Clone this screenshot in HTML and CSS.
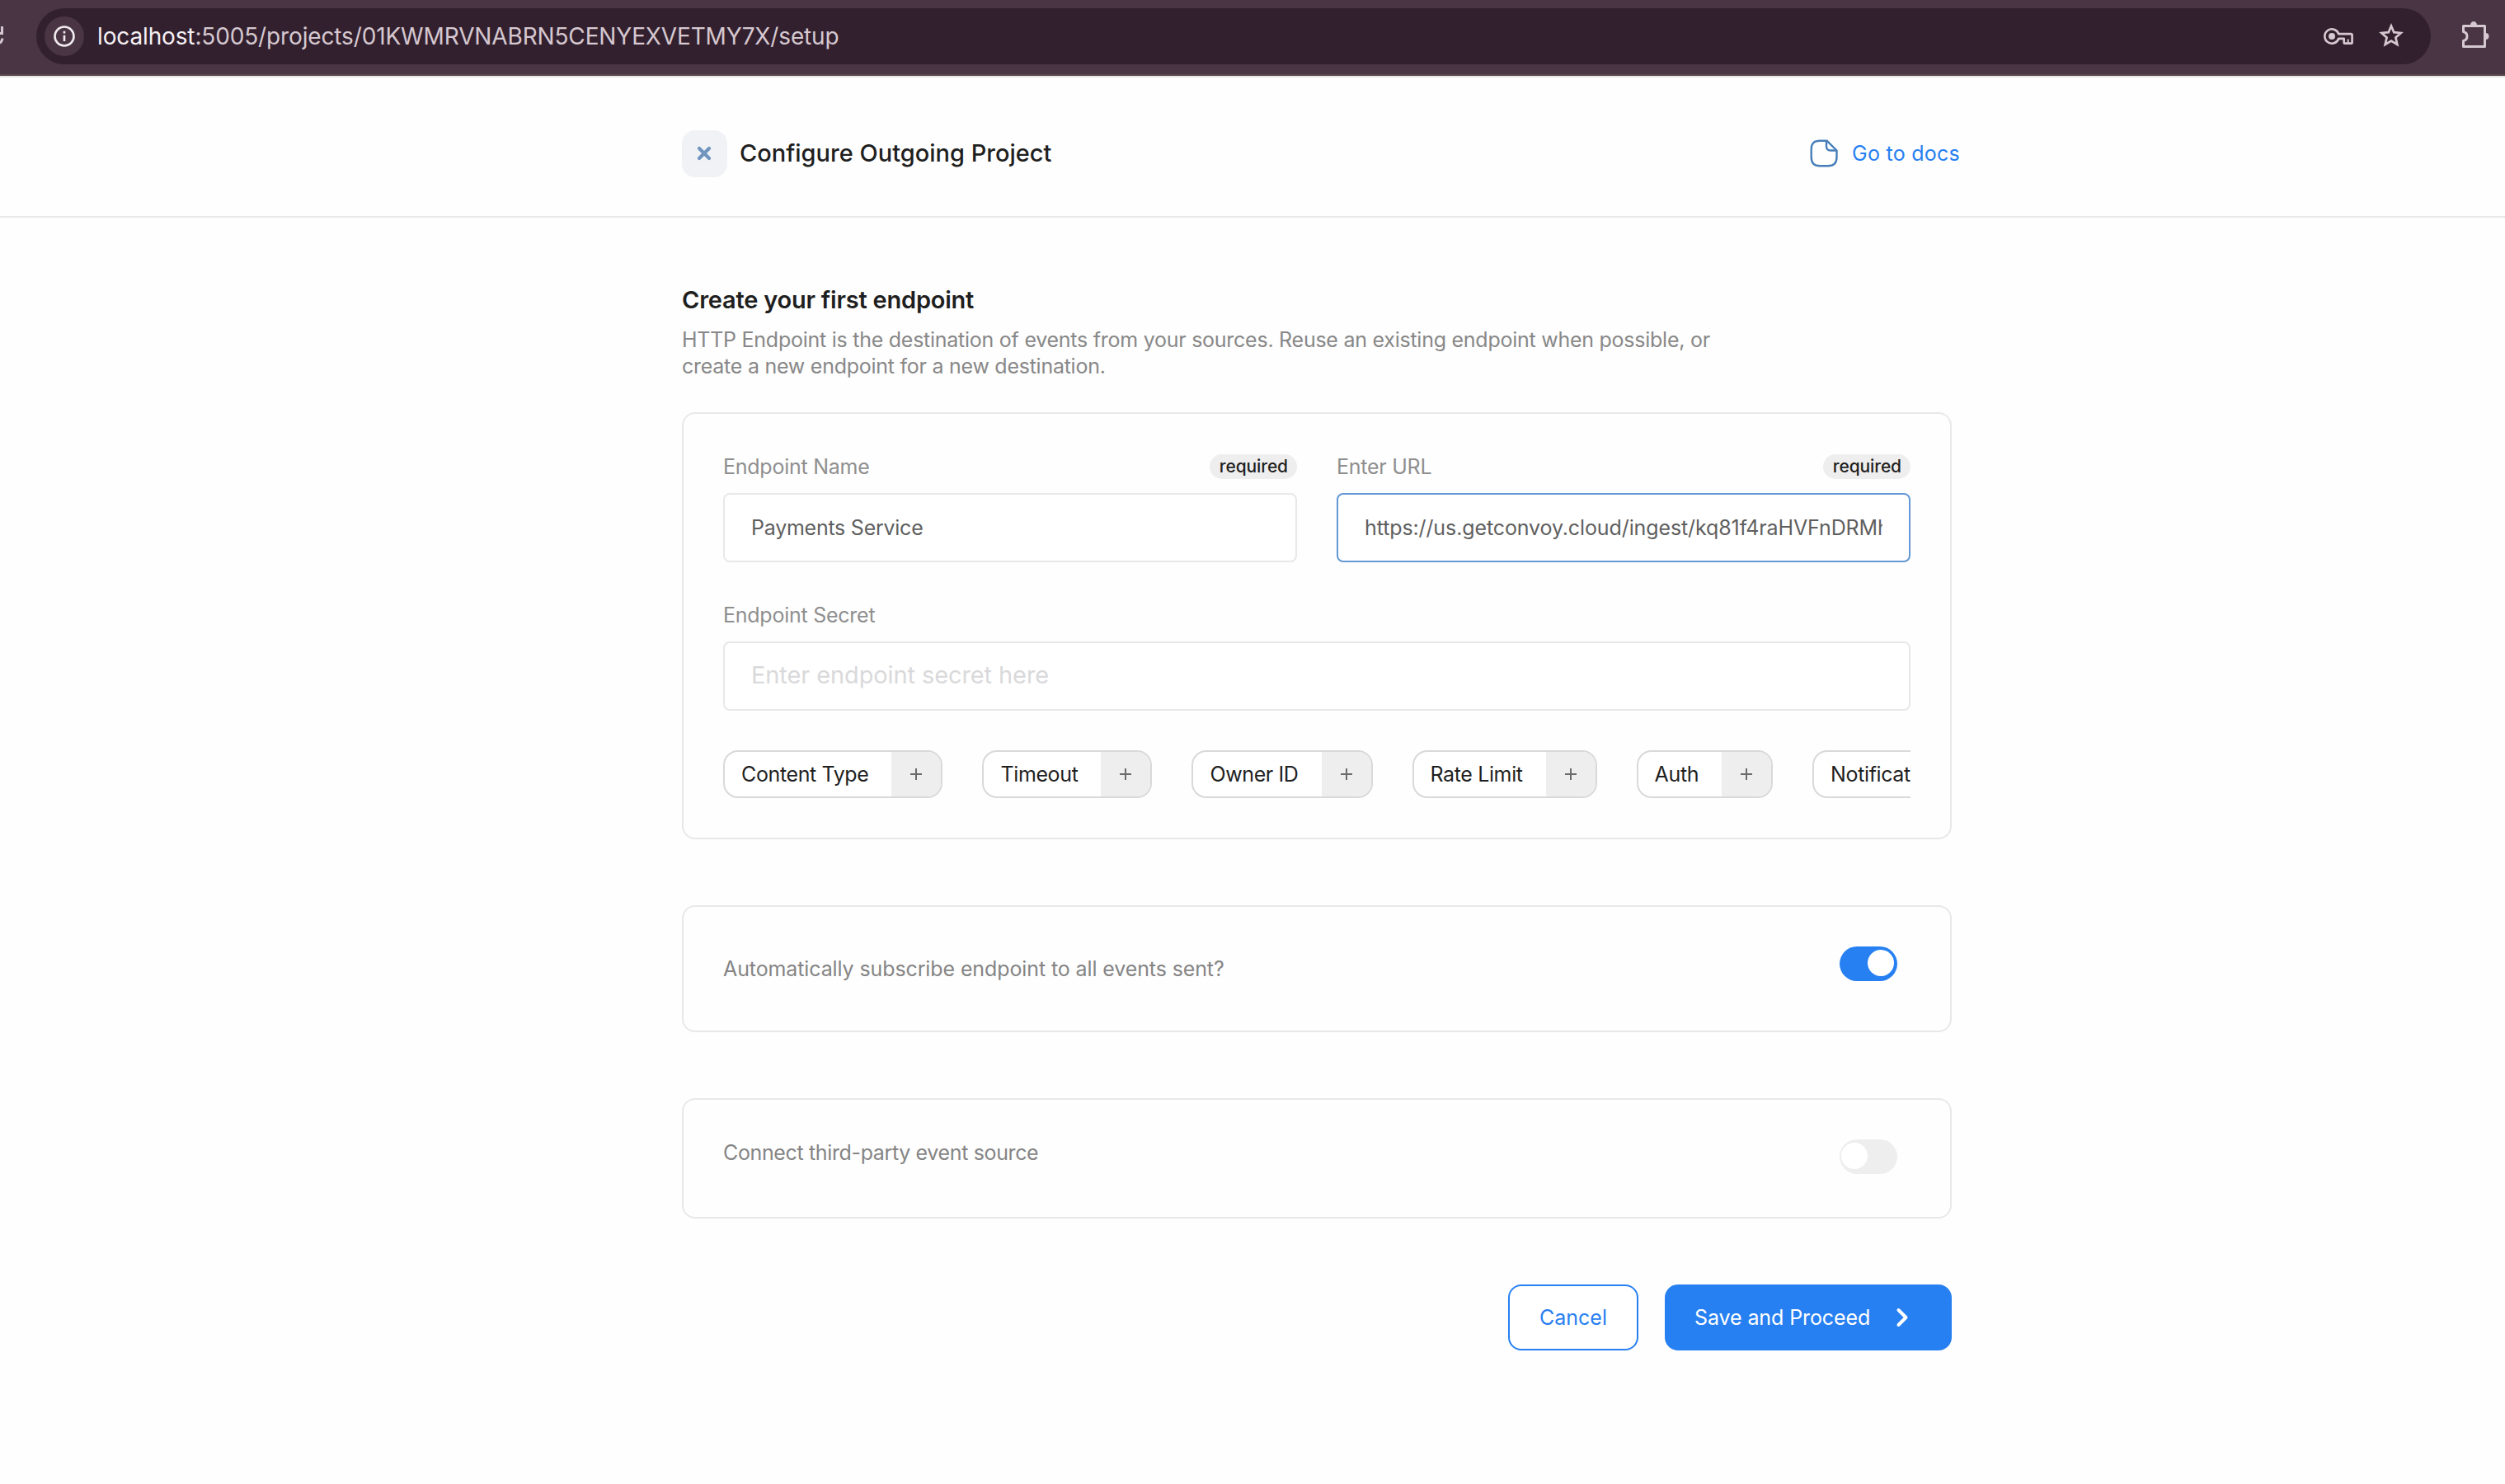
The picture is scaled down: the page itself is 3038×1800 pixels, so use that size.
FILE: index.html
```html
<!DOCTYPE html>
<html>
<head>
    <title>Configure Outgoing Project</title>
    <meta charset="UTF-8">
    <link rel="stylesheet" href="styles.css">
</head>
<body>

    <!-- Browser bar -->
    <div class="browser-bar">
        <svg class="reload-icon" width="6" height="26" viewBox="0 0 6 26" fill="none" stroke="#d5c8d0" stroke-width="3">
            <path d="M2.500 0v8.500H0"/>
            <path d="M3 14.500Q2.600 18 0 20.500"/>
        </svg>
        <div class="omnibox">
            <div class="site-info">
                <svg width="26" height="26" viewBox="0 0 26 26" fill="none" stroke="#f0ebee" stroke-width="2.600">
                    <circle cx="13" cy="13" r="11.500"/>
                    <path d="M13 11.800v7.200M13 6.800v2.600"/>
                </svg>
            </div>
            <div class="url"><span>localhost</span>:5005/projects/01KWMRVNABRN5CENYEXVETMY7X/setup</div>
            <svg class="key-icon" width="36" height="22" viewBox="0 0 36 22" fill="none" stroke="#d5c8d0" stroke-width="2.700" stroke-linejoin="round">
                <path d="M18.300 8.200A8.700 8.700 0 1 0 18.300 13.800H24.700V18.200Q24.700 19.700 26.200 19.700H33Q34.600 19.700 34.600 18.200V9.700Q34.600 8.200 33 8.200Z"/>
                <circle cx="10" cy="11" r="4" fill="#d5c8d0" stroke="none"/>
                <path d="M29.700 19v-4.500" stroke-width="2"/>
            </svg>
            <svg class="star-icon" width="32" height="30" viewBox="0 0 32 30" fill="none" stroke="#d5c8d0" stroke-width="2.700">
                <path d="M16 3.500L19.300 11.200L27.700 12L21.400 17.600L23.300 25.900L16 21.500L8.700 25.900L10.600 17.600L4.300 12L12.700 11.200Z"/>
            </svg>
        </div>
        <svg class="puzzle-icon" width="33" height="33" viewBox="0 0 33 33" fill="none" stroke="#d5c8d0" stroke-width="3" stroke-linejoin="round">
            <path d="M1.500 5.500H27.500V30.500H1.500V23.500Q6 22.500 6 18Q6 13.500 1.500 12.500Z"/>
            <path d="M10 4.500A4 4.500 0 0 1 18 4.500ZM28.500 14A4 4 0 0 1 28.500 22Z" fill="#d5c8d0" stroke="none"/>
        </svg>
    </div>

    <!-- Page header -->
    <header class="page-header">
        <div class="header-inner">
            <button class="close-btn" type="button">
                <svg width="18" height="18" viewBox="0 0 18 18" fill="none" stroke="#6f94bd" stroke-width="4.200" stroke-linecap="round">
                    <path d="M3 3L15 15M15 3L3 15"/>
                </svg>
            </button>
            <h1>Configure Outgoing Project</h1>
            <a class="docs-link">
                <svg width="34" height="34" viewBox="0 0 34 34" fill="none" stroke="#477eb9" stroke-width="2.400" stroke-linejoin="round">
                    <path d="M20.500 1.700H12Q1.700 1.700 1.700 12V21.500Q1.700 32.300 12 32.300H22Q32.500 32.300 32.500 21.500V13.500Z"/>
                    <path d="M20 2V8.500Q20 13.500 25 13.500H32"/>
                </svg>
                Go to docs
            </a>
        </div>
    </header>

    <!-- Endpoint setup -->
    <main class="container">
        <h2>Create your first endpoint</h2>
        <p class="description">HTTP Endpoint is the destination of events from your sources. Reuse an existing endpoint when possible, or<br>create a new endpoint for a new destination.</p>

        <div class="card">
            <div class="field-row">
                <div class="field">
                    <div class="field-label">
                        <label for="name">Endpoint Name</label>
                        <span class="badge">required</span>
                    </div>
                    <input type="text" id="name" value="Payments Service">
                </div>
                <div class="field">
                    <div class="field-label">
                        <label for="url">Enter URL</label>
                        <span class="badge">required</span>
                    </div>
                    <input type="text" id="url" class="focused" value="https://us.getconvoy.cloud/ingest/kq81f4raHVFnDRMh">
                </div>
            </div>

            <div class="field">
                <div class="field-label">
                    <label for="secret">Endpoint Secret</label>
                </div>
                <input type="text" id="secret" placeholder="Enter endpoint secret here">
            </div>

            <div class="pills">
                <button class="pill" type="button"><span class="pill-name">Content Type</span><span class="pill-add"></span></button>
                <button class="pill" type="button"><span class="pill-name">Timeout</span><span class="pill-add"></span></button>
                <button class="pill" type="button"><span class="pill-name">Owner ID</span><span class="pill-add"></span></button>
                <button class="pill" type="button"><span class="pill-name">Rate Limit</span><span class="pill-add"></span></button>
                <button class="pill" type="button"><span class="pill-name">Auth</span><span class="pill-add"></span></button>
                <button class="pill" type="button"><span class="pill-name">Notifications</span><span class="pill-add"></span></button>
            </div>
        </div>

        <div class="card toggle-card subscribe">
            <span class="toggle-label">Automatically subscribe endpoint to all events sent?</span>
            <div class="toggle on"></div>
        </div>

        <div class="card toggle-card source">
            <span class="toggle-label">Connect third-party event source</span>
            <div class="toggle"></div>
        </div>

        <div class="actions">
            <button class="btn btn-outline" type="button">Cancel</button>
            <button class="btn btn-primary" type="button">
                Save and Proceed
                <svg width="16" height="24" viewBox="0 0 16 24" fill="none" stroke="#fff" stroke-width="4" stroke-linecap="round" stroke-linejoin="round">
                    <path d="M3.500 3L12.500 12L3.500 21"/>
                </svg>
            </button>
        </div>
    </main>

</body>
</html>
```
FILE: styles.css
```css
* {
    box-sizing: border-box;
}

body {
    font-family: Inter, "Liberation Sans", sans-serif;
    font-size: 25px;
    background-color: #fefefe;
    color: #1f1f1f;
    margin: 0;
    overflow: hidden;
}

button,
input {
    font-family: inherit;
    font-size: 25px;
    letter-spacing: inherit;
}

svg {
    display: block;
    flex-shrink: 0;
}

/* Browser bar */
.browser-bar {
    display: flex;
    align-items: flex-start;
    height: 94px;
    background-color: #4a3545;
    border-bottom: 2px solid #e6e6e6;
    box-shadow: inset 0 -2px 0 #57474b;
}

.reload-icon {
    margin: 32px 38px 0 0;
}

.omnibox {
    display: flex;
    align-items: center;
    width: 2904px;
    height: 68px;
    margin-top: 10px;
    padding: 0 32px 0 10px;
    border-radius: 34px;
    background-color: #33202e;
}

.site-info {
    display: flex;
    align-items: center;
    justify-content: center;
    width: 48px;
    height: 48px;
    border-radius: 50%;
    background-color: #4a3545;
}

.url {
    flex: 1;
    margin-left: 16px;
    font-size: 28px;
    letter-spacing: -0.14px;
    color: #d5c8d0;
}

.url span {
    color: #f5f0f3;
}

.key-icon {
    margin-right: 30px;
}

.star-icon {
    margin-bottom: 2px;
}

.puzzle-icon {
    margin: 26px 0 0 38px;
}

/* Header */
.page-header {
    height: 170px;
    padding-top: 64px;
    border-bottom: 2px solid #e8e8e8;
}

.header-inner {
    display: flex;
    align-items: center;
    width: 1550px;
    height: 57px;
    margin-left: 827px;
}

.close-btn {
    display: flex;
    align-items: center;
    justify-content: center;
    width: 55px;
    height: 57px;
    padding: 0 1px 1px 0;
    border: none;
    border-radius: 16px;
    background-color: #f1f2f6;
}

h1 {
    flex: 1;
    margin: 0;
    padding: 0 0 2px 15px;
    font-size: 29px;
    font-weight: 500;
}

.docs-link {
    display: flex;
    align-items: center;
    gap: 17px;
    padding-bottom: 2px;
    letter-spacing: 0.25px;
    color: #2780f1;
}

/* Form */
.container {
    width: 1540px;
    margin-left: 827px;
    padding-top: 82px;
}

h2 {
    margin: 0 0 14px;
    font-size: 29px;
    line-height: 36px;
    font-weight: 600;
    letter-spacing: -0.22px;
}

.description {
    margin: 0 0 40px;
    line-height: 32px;
    letter-spacing: -0.255px;
    white-space: nowrap;
    color: #888;
}

.card {
    margin-bottom: 80px;
    padding: 48px;
    border: 2px solid #e8e8e8;
    border-radius: 16px;
}

.field-row {
    display: grid;
    grid-template-columns: 1fr 1fr;
    gap: 48px;
}

.field {
    margin-bottom: 48px;
}

.field-label {
    display: flex;
    align-items: center;
    justify-content: space-between;
    height: 32px;
    margin-bottom: 16px;
    letter-spacing: -0.25px;
    color: #8f8f8f;
}

.badge {
    height: 30px;
    padding: 0 11px 0 12px;
    border-radius: 15px;
    background-color: #eee;
    color: #1f1f1f;
    font-size: 21px;
    line-height: 30px;
    font-weight: 500;
    letter-spacing: -0.1px;
}

input {
    display: block;
    width: 100%;
    height: 84px;
    padding: 0 32px;
    border: 2px solid #e8e8e8;
    border-radius: 8px;
    outline: none;
    background-color: #fff;
    letter-spacing: -0.25px;
    color: #5f5f5f;
}

input.focused {
    border-color: #6398d2;
    letter-spacing: -0.11px;
}

input::placeholder {
    font-size: 29px;
    letter-spacing: -0.1px;
    color: #d9d9db;
}

.pills {
    display: flex;
    gap: 48px;
    overflow: hidden;
}

.pill {
    display: flex;
    flex-shrink: 0;
    height: 58px;
    padding: 0;
    border: 2px solid #d9d9d9;
    border-radius: 18px;
    background-color: #fff;
    color: #1f1f1f;
    overflow: hidden;
}

.pill-name {
    padding: 0 28px 0 20px;
    line-height: 54px;
    letter-spacing: -0.38px;
}

/* Plus sign made of two thin bars */
.pill-add {
    width: 60px;
    height: 54px;
    background:
        linear-gradient(#6b6b6b, #6b6b6b) center / 14px 2px no-repeat,
        linear-gradient(#6b6b6b, #6b6b6b) center / 2px 14px no-repeat,
        #eee;
}

.toggle-card {
    display: flex;
    align-items: flex-start;
    justify-content: space-between;
    padding-right: 64px;
    line-height: 32px;
    color: #858585;
}

.subscribe {
    height: 154px;
    letter-spacing: -0.11px;
}

.subscribe .toggle-label {
    align-self: center;
}

.source {
    height: 146px;
    letter-spacing: -0.36px;
}

.toggle {
    width: 70px;
    height: 42px;
    padding: 4px 2px;
    border-radius: 21px;
    background-color: #eee;
}

.toggle::before {
    content: "";
    display: block;
    width: 32px;
    height: 32px;
    border-radius: 50%;
    background-color: #fff;
}

.toggle.on {
    background-color: #2780f1;
}

.toggle.on::before {
    margin-left: 32px;
}

.actions {
    display: flex;
    justify-content: flex-end;
    gap: 32px;
}

.btn {
    display: flex;
    align-items: center;
    height: 80px;
    border: 2px solid #2780f1;
    border-radius: 16px;
}

.btn-outline {
    justify-content: center;
    width: 158px;
    background-color: #fff;
    color: #2780f1;
}

.btn-primary {
    justify-content: space-between;
    width: 348px;
    padding: 0 50px 0 34px;
    background-color: #2780f1;
    color: #fff;
    letter-spacing: -0.1px;
}
```
